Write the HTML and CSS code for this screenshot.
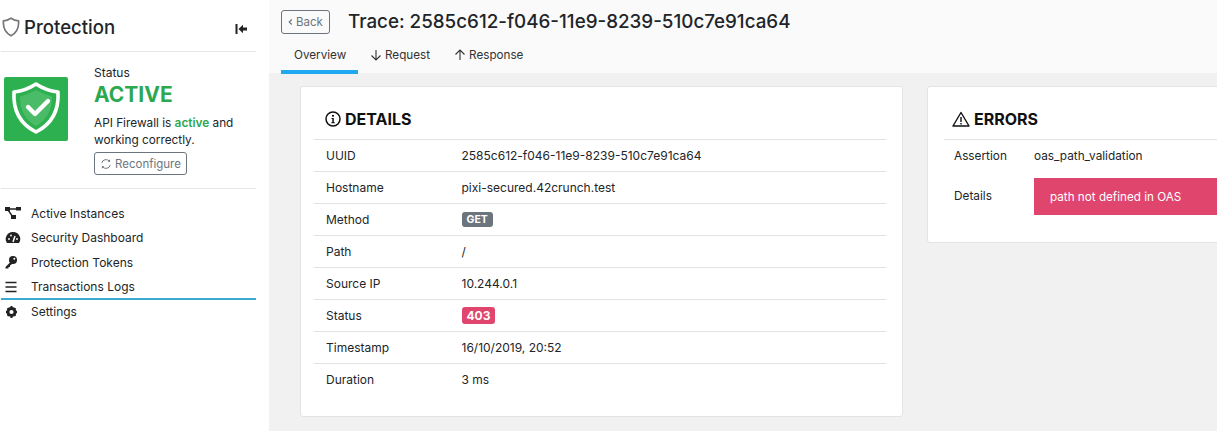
FILE: index.html
```html
<!DOCTYPE html>
<html lang="en">
<head>
<meta charset="utf-8">
<title>Trace</title>
<link rel="stylesheet" href="styles.css">
</head>
<body>
<div class="app">
  <aside class="sidebar">
    <div class="brand">
      <div class="brand-name">
        <svg class="brand-shield" viewBox="0 0 18 20"><path d="M9 1.200C11.500 2.800 14 3.600 16.600 3.800c.4 5.800-.9 11.300-7.600 15C2.300 15.100 1 9.600 1.400 3.800 4 3.600 6.500 2.800 9 1.200z" fill="none" stroke="#777" stroke-width="1.700" stroke-linejoin="round"/></svg>
        <span>Protection</span>
      </div>
      <svg class="collapse" viewBox="0 0 12 12"><rect x="0.500" y="1" width="2" height="10" fill="#222"/><path d="M3.500 6 8 1.800V4.500h4v3H8v2.700z" fill="#222"/></svg>
    </div>
    <div class="status">
      <div class="status-badge">
        <svg viewBox="0 0 64 64" width="64" height="64"><path d="M32 7C38 11 46 14 54 15 55 33 48 47 32 55 16 47 9 33 10 15 18 14 26 11 32 7z" fill="none" stroke="#fff" stroke-width="3.600" stroke-linejoin="round"/><path d="M32 13C37 16 43 18 48 19.500 48 33 43 43 32 49 21 43 16 33 16 19.500 21 18 27 16 32 13z" fill="#fff" fill-opacity=".14"/><path d="M24 30l7 7 13-13" fill="none" stroke="#fff" stroke-width="4.400" stroke-linecap="round" stroke-linejoin="round"/></svg>
      </div>
      <div class="status-body">
        <div class="status-label">Status</div>
        <div class="status-value">ACTIVE</div>
        <p class="status-text">API Firewall is <b>active</b> and working correctly.</p>
        <button class="btn btn-reconf"><svg viewBox="0 0 14 14" width="12" height="12"><path d="M2 6a5 5 0 0 1 9-2M12 8a5 5 0 0 1-9 2" fill="none" stroke="#6c757d" stroke-width="1.100"/><path d="M11.800 1.500v3h-3zM2.200 12.500v-3h3z" fill="#6c757d"/></svg>Reconfigure</button>
      </div>
    </div>
    <nav class="nav">
      <a class="nav-item"><svg viewBox="0 0 16 14" width="16" height="14"><rect x="0" y="1" width="5" height="4" fill="#222"/><rect x="11" y="1" width="5" height="3.500" fill="#222"/><rect x="6" y="9" width="5" height="4" fill="#222"/><path d="M4 3h8M3 4l5 7" stroke="#222" stroke-width="1.300"/></svg><span>Active Instances</span></a>
      <a class="nav-item"><svg viewBox="0 0 16 14" width="16" height="14"><path d="M8 1a7 7 0 0 0-6 11h12A7 7 0 0 0 8 1z" fill="#222"/><path d="M8 11 10 5" stroke="#fff" stroke-width="1.500"/><circle cx="4" cy="8" r=".9" fill="#fff"/><circle cx="12" cy="8" r=".9" fill="#fff"/><circle cx="6" cy="4.500" r=".9" fill="#fff"/></svg><span>Security Dashboard</span></a>
      <a class="nav-item"><svg viewBox="0 0 16 14" width="16" height="14"><circle cx="8" cy="5" r="4" fill="#222"/><path d="M6.500 6 .5 12v1.500h3V12H5v-1.500L8.500 8z" fill="#222"/><circle cx="9.300" cy="3.700" r="1" fill="#fff"/></svg><span>Protection Tokens</span></a>
      <a class="nav-item nav-active"><svg viewBox="0 0 16 14" width="16" height="14"><path d="M.5 2.500h11M.5 7h11M.5 11.500h11" stroke="#222" stroke-width="1.500"/></svg><span>Transactions Logs</span></a>
      <a class="nav-item"><svg viewBox="0 0 16 14" width="16" height="14"><circle cx="6.500" cy="7" r="3.600" fill="none" stroke="#222" stroke-width="3"/><path d="M6.500 1v2M6.500 11v2M1 7h2M10 7h2M2.600 3.100l1.400 1.400M9 9.500l1.400 1.400M2.600 10.900 4 9.500M9 4.500l1.400-1.400" stroke="#222" stroke-width="2"/></svg><span>Settings</span></a>
    </nav>
  </aside>
  <main class="main">
    <header class="head">
      <div class="title-row">
        <button class="btn btn-back"><svg viewBox="0 0 6 8" width="5" height="8"><path d="M4.500 1 1.500 4l3 3" fill="none" stroke="#6c757d" stroke-width="1.400"/></svg>Back</button>
        <h1>Trace: 2585c612-f046-11e9-8239-510c7e91ca64</h1>
      </div>
      <div class="tabs">
        <a class="tab tab-active">Overview</a>
        <a class="tab"><svg viewBox="0 0 12 12" width="12" height="12"><path d="M6 1v10M1.500 6.500 6 11l4.500-4.500" fill="none" stroke="#333" stroke-width="1.100"/></svg>Request</a>
        <a class="tab"><svg viewBox="0 0 12 12" width="12" height="12"><path d="M6 11V1M1.500 5.500 6 1l4.500 4.500" fill="none" stroke="#333" stroke-width="1.100"/></svg>Response</a>
      </div>
    </header>
    <div class="content">
      <section class="card card-details">
        <h2><svg viewBox="0 0 16 16" width="16" height="16"><circle cx="8" cy="8" r="7" fill="none" stroke="#111" stroke-width="1.500"/><circle cx="8" cy="4.800" r="1.100" fill="#111"/><path d="M6.500 7h2.300v4.200h1v1H6.300v-1h1V8H6.500z" fill="#111"/></svg>DETAILS</h2>
        <div class="row"><span class="key">UUID</span><span>2585c612-f046-11e9-8239-510c7e91ca64</span></div>
        <div class="row"><span class="key">Hostname</span><span>pixi-secured.42crunch.test</span></div>
        <div class="row"><span class="key">Method</span><span class="badge badge-gray">GET</span></div>
        <div class="row"><span class="key">Path</span><span>/</span></div>
        <div class="row"><span class="key">Source IP</span><span>10.244.0.1</span></div>
        <div class="row"><span class="key">Status</span><span class="badge badge-red">403</span></div>
        <div class="row"><span class="key">Timestamp</span><span>16/10/2019, 20:52</span></div>
        <div class="row"><span class="key">Duration</span><span>3 ms</span></div>
      </section>
      <section class="card card-errors">
        <h2><svg viewBox="0 0 18 16" width="18" height="16"><path d="M9 1.500 17 15H1z" fill="none" stroke="#111" stroke-width="1.400" stroke-linejoin="round"/><path d="M9 6v5M9 12v1.500" stroke="#111" stroke-width="1.400"/></svg>ERRORS</h2>
        <div class="err-row"><span class="err-key">Assertion</span><span>oas_path_validation</span></div>
        <div class="err-row err-detail"><span class="err-key err-key-up">Details</span><span class="alert">path not defined in OAS</span></div>
      </section>
    </div>
  </main>
</div>
</body>
</html>
```
FILE: styles.css
```css
* { box-sizing: border-box; }
html, body { margin: 0; height: 100%; overflow: hidden; }
body { font-family: Inter, "Liberation Sans", sans-serif; font-size: 12px; color: #212529; background: #f1f1f1; }
.app { display: flex; height: 431px; width: 1217px; overflow: hidden; }

.sidebar { width: 269px; flex: none; background: #fff; padding-right: 13px; padding-left: 1px; }
.brand { height: 52px; display: flex; align-items: center; justify-content: space-between; border-bottom: 1px solid #e6e6e6; padding: 3px 9px 0 1px; }
.brand-name { display: flex; align-items: center; gap: 4px; font-size: 18.600px; font-weight: 500; color: #212529; }
.brand-shield { width: 18px; height: 20px; }
.collapse { width: 12px; height: 12px; margin-top: 3px; }
.status { height: 137px; display: flex; border-bottom: 1px solid #e6e6e6; padding: 25px 0 0 3px; position: relative; }
.status-badge { width: 64px; height: 64px; background: #2db04f; border-radius: 2px; margin-right: 26px; flex: none; }
.status-badge svg { display: block; }
.status-body { margin-top: -12px; }
.status-label { font-size: 12px; line-height: 16px; }
.status-value { font-size: 21px; font-weight: 700; color: #2ea84f; line-height: 27px; margin-bottom: 7px; }
.status-text { margin: 0 0 3px; width: 150px; font-size: 11.800px; line-height: 17px; }
.status-text b { font-weight: 600; color: #2ea84f; }
.btn { display: inline-flex; align-items: center; background: transparent; border: 1px solid #6c757d; border-radius: 3px; color: #6c757d; font: inherit; padding: 0; }
.btn-reconf { height: 23px; width: 93px; gap: 3px; justify-content: center; font-size: 11.500px; }
.nav { padding-top: 12px; }
.nav-item { display: flex; align-items: center; height: 24.500px; gap: 10px; padding-left: 4px; color: #212529; }
.nav-item svg { flex: none; }
.nav-active { border-bottom: 2px solid #3ba9d4; height: 25px; padding-top: 1px; }

.main { flex: 1; min-width: 0; display: flex; flex-direction: column; }
.head { height: 73px; background: #fafafa; padding: 10px 0 0 12px; flex: none; }
.title-row { display: flex; align-items: center; height: 24px; }
.btn-back { height: 24px; width: 49px; gap: 3px; justify-content: center; font-size: 11.500px; margin-right: 18px; }
h1 { margin: 0; font-size: 18.800px; font-weight: 500; color: #212529; line-height: 24px; }
.tabs { display: flex; margin-top: 9px; }
.tab { height: 31px; display: flex; align-items: center; gap: 3px; padding: 0 12px 8px; color: #333; font-size: 11.700px; }
.tab-active { width: 77px; border-bottom: 4px solid #1fa9ee; padding: 0 0 4px 13px; }

.content { flex: 1; display: flex; align-items: flex-start; padding: 13px 0 0 31px; gap: 24px; min-width: 0; }
.card { background: #fff; border: 1px solid #e4e4e4; border-radius: 3px; flex: none; }
.card-details { width: 603px; height: 331px; padding: 0 16px 0 13px; }
.card-errors { width: 320px; height: 157px; padding: 0; margin-right: -40px; font-size: 11.800px; }
h2 { margin: 0; display: flex; align-items: center; gap: 4px; font-size: 16px; font-weight: 700; color: #111; height: 53px; padding-top: 11px; border-bottom: 1px solid #e2e2e2; padding-left: 11px; }
.card-errors h2 { margin-left: 16px; padding-left: 8px; }
.row { display: flex; align-items: center; height: 32px; border-bottom: 1px solid #e2e2e2; padding-left: 12px; }
.row:last-child { border-bottom: 0; padding-bottom: 2px; }
.key { width: 135.500px; flex: none; }
.badge { color: #fff; font-weight: 700; border-radius: 3px; display: inline-block; }
.badge-gray { background: #6c757d; font-size: 10.500px; padding: 1px 5px; line-height: 13px; }
.badge-red { background: #e0456d; font-size: 12px; padding: 1px 5px; line-height: 15px; }
.err-row { display: flex; align-items: center; height: 32px; padding-left: 26px; }
.err-key { width: 80px; flex: none; }
.err-key-up { padding-bottom: 2px; }
.err-detail { height: 37px; margin-top: 6px; }
.alert { flex: 1; height: 37px; background: #e0456d; color: #fff; display: flex; align-items: center; padding-left: 16px; font-size: 11.700px; }
```
